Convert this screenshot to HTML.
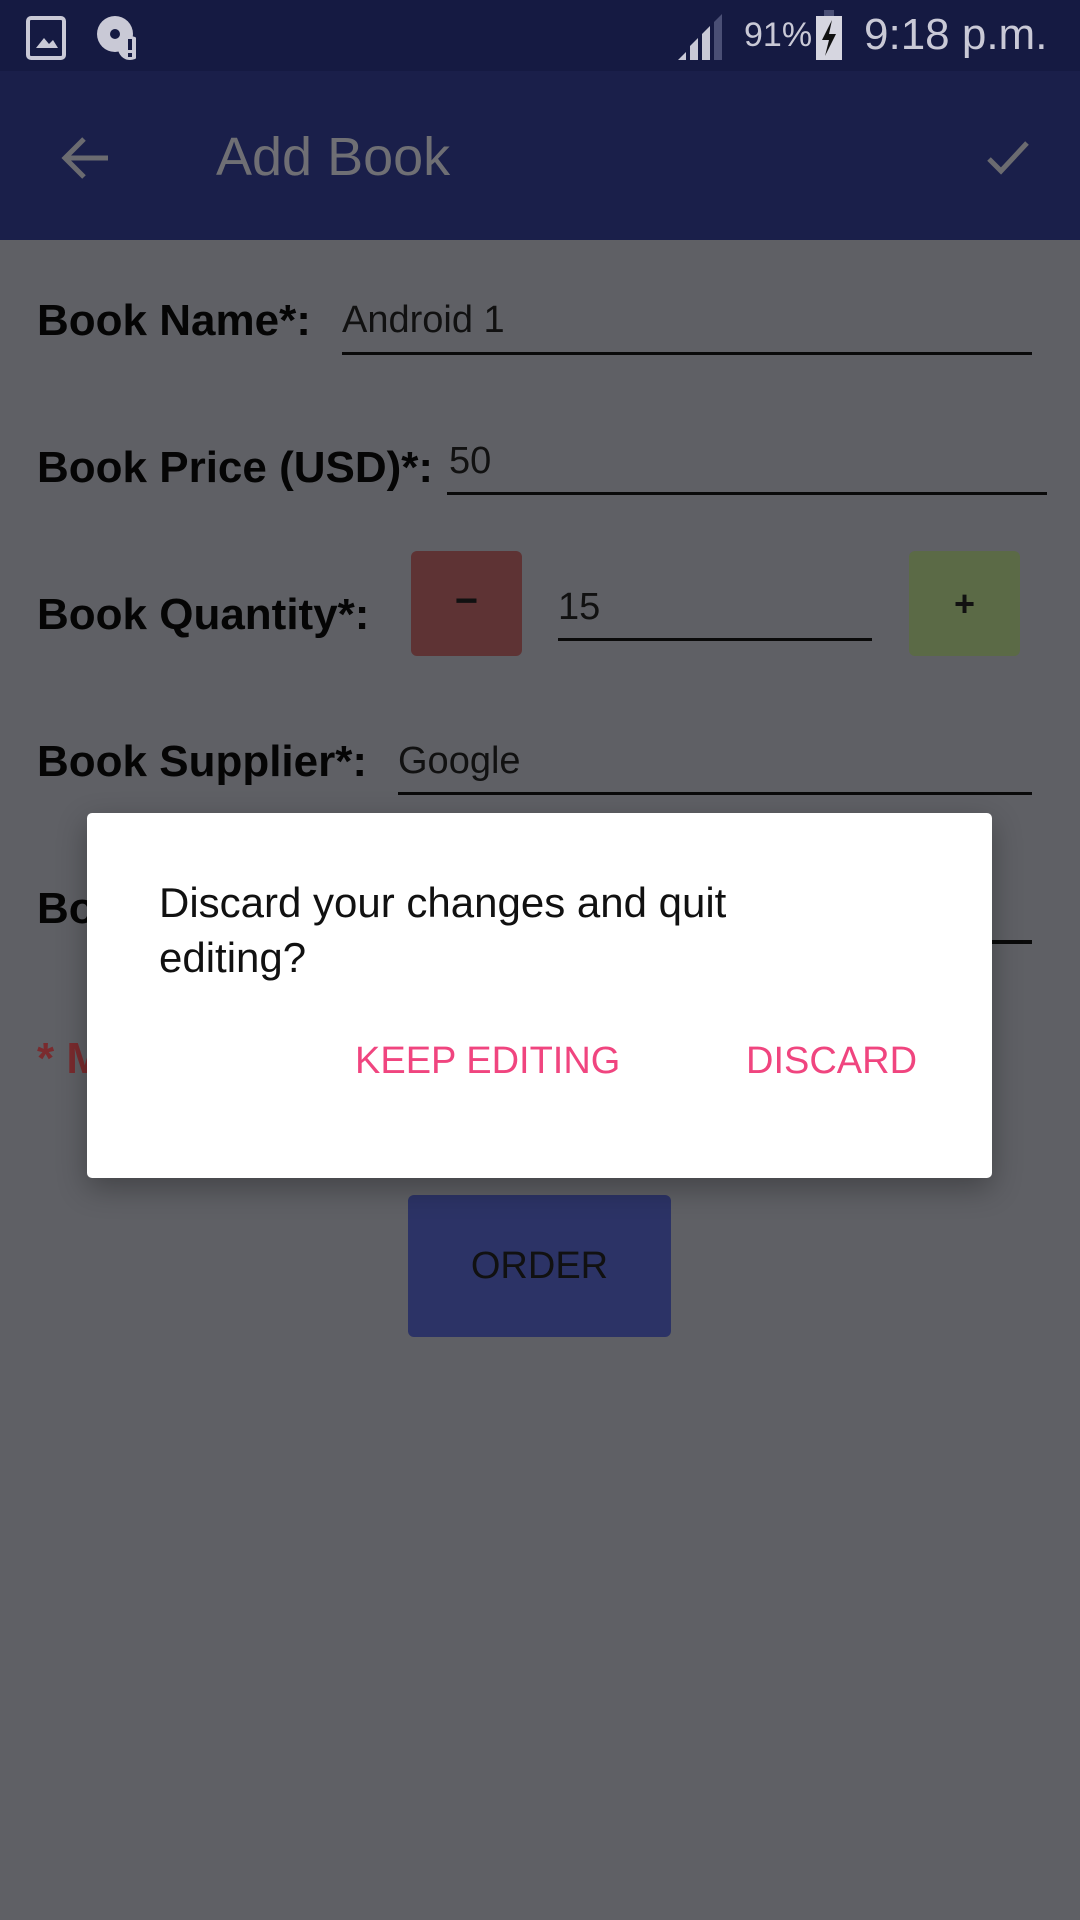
<!DOCTYPE html>
<html><head><meta charset="utf-8"><style>
*{margin:0;padding:0;box-sizing:border-box}
body{width:1080px;height:1920px;background:#5f6065;font-family:"Liberation Sans",sans-serif;position:relative;overflow:hidden}
.a{position:absolute}
.sb{left:0;top:0;width:1080px;height:71px;background:#151a42}
.ab{left:0;top:71px;width:1080px;height:169px;background:#1a1f4a}
.lbl{font-weight:bold;font-size:44px;color:#050505;white-space:nowrap}
.inp{font-size:38px;color:#111}
.ul{height:3px;background:#0a0a0a}
</style></head><body>
<div class="a sb"></div>
<div class="a ab"></div>
<svg class="a" style="left:26px;top:14px" width="110" height="50" viewBox="0 0 110 50">
<rect x="2" y="4" width="36" height="40" rx="3" fill="none" stroke="#c9c9d6" stroke-width="4"/>
<path d="M10 34 L18 24 L23 30 L27 26 L32 34 Z" fill="#c9c9d6"/>
<circle cx="89" cy="20" r="18" fill="#c9c9d6"/><circle cx="89" cy="20" r="5" fill="#151a42"/>
<circle cx="104" cy="34" r="12" fill="#c9c9d6"/><rect x="102" y="25" width="4" height="11" fill="#151a42"/><rect x="102" y="39" width="4" height="4" fill="#151a42"/>
</svg>
<svg class="a" style="left:676px;top:12px" width="50" height="50" viewBox="0 0 50 50">
<path d="M2 48 L10 40 V48Z M14 48 V34 L22 26 V48Z M26 48 V22 L34 14 V48Z" fill="#c9c9d6"/>
<path d="M38 48 V10 L46 2 V48Z" fill="#4a4f75"/></svg>
<div class="a" style="left:744px;top:16px;font-size:34px;color:#c9c9d6">91%</div>
<svg class="a" style="left:814px;top:10px" width="30" height="52" viewBox="0 0 30 52"><rect x="10" y="0" width="10" height="6" fill="#4a4f75"/><rect x="2" y="6" width="26" height="44" fill="#d6d6e0"/><path d="M18 10 L8 30 H15 L11 46 L22 24 H15 Z" fill="#111"/></svg>
<div class="a" style="left:864px;top:10px;font-size:44px;color:#c9c9d6;white-space:nowrap">9:18 p.m.</div>
<svg class="a" style="left:58px;top:131px" width="54" height="54" viewBox="0 0 54 54"><path d="M50 27 H8 M26 8 L7 27 L26 46" fill="none" stroke="#6b6b70" stroke-width="5"/></svg>
<div class="a" style="left:216px;top:126px;font-size:54px;color:#6f6f74">Add Book</div>
<svg class="a" style="left:986px;top:138px" width="44" height="40" viewBox="0 0 44 40"><path d="M3 21 L15 33 L41 5" fill="none" stroke="#6b6b70" stroke-width="5"/></svg>
<div class="a lbl" style="left:37px;top:296px">Book Name*:</div>
<div class="a inp" style="left:342px;top:299px">Android 1</div>
<div class="a ul" style="left:342px;top:352px;width:690px"></div>
<div class="a lbl" style="left:37px;top:443px">Book Price (USD)*:</div>
<div class="a inp" style="left:449px;top:440px">50</div>
<div class="a ul" style="left:447px;top:492px;width:600px"></div>
<div class="a lbl" style="left:37px;top:590px">Book Quantity*:</div>
<div class="a" style="left:411px;top:551px;width:111px;height:105px;background:#5e3334;border-radius:6px;font-size:40px;font-weight:bold;color:#111;text-align:center;line-height:100px">−</div>
<div class="a inp" style="left:558px;top:586px">15</div>
<div class="a ul" style="left:558px;top:638px;width:314px"></div>
<div class="a" style="left:909px;top:551px;width:111px;height:105px;background:#5b6a46;border-radius:6px;font-size:36px;font-weight:bold;color:#111;text-align:center;line-height:105px">+</div>
<div class="a lbl" style="left:37px;top:737px">Book Supplier*:</div>
<div class="a inp" style="left:398px;top:740px">Google</div>
<div class="a ul" style="left:398px;top:792px;width:634px"></div>
<div class="a lbl" style="left:37px;top:884px">Book Supplier Phone:</div>
<div class="a ul" style="left:520px;top:940px;width:512px;height:4px"></div>
<div class="a lbl" style="left:37px;top:1034px;color:#7a2b2e">* Mandatory fields</div>
<div class="a" style="left:408px;top:1195px;width:263px;height:142px;background:#2c3366;border-radius:6px;font-size:38px;color:#111;text-align:center;line-height:142px">ORDER</div>
<div class="a" style="left:87px;top:813px;width:905px;height:365px;background:#fff;border-radius:5px;box-shadow:0 10px 30px rgba(0,0,0,.3)"></div>
<div class="a" style="left:159px;top:875px;width:660px;font-size:42px;line-height:55px;color:#111">Discard your changes and quit editing?</div>
<div class="a" style="left:355px;top:1040px;font-size:38px;color:#f0457f">KEEP EDITING</div>
<div class="a" style="left:746px;top:1040px;font-size:38px;color:#f0457f">DISCARD</div>
</body></html>
